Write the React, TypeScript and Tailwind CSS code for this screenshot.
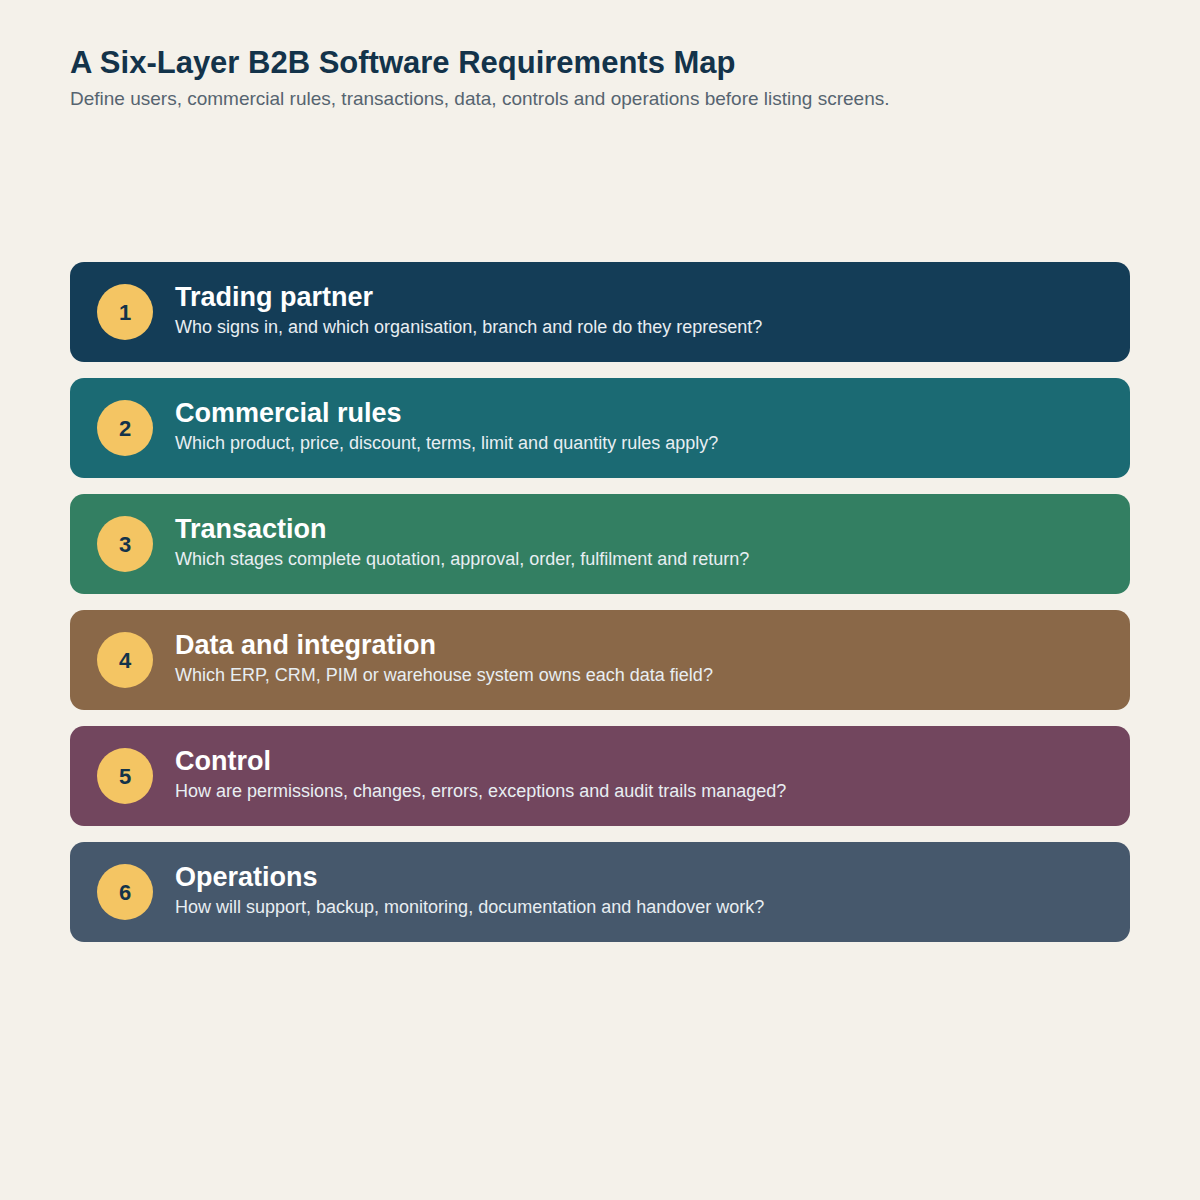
export default function App() {
  const rows = [
    ["Trading partner", "Who signs in, and which organisation, branch and role do they represent?", "bg-[#143d57]"],
    ["Commercial rules", "Which product, price, discount, terms, limit and quantity rules apply?", "bg-[#1b6a73]"],
    ["Transaction", "Which stages complete quotation, approval, order, fulfilment and return?", "bg-[#337f62]"],
    ["Data and integration", "Which ERP, CRM, PIM or warehouse system owns each data field?", "bg-[#8a6848]"],
    ["Control", "How are permissions, changes, errors, exceptions and audit trails managed?", "bg-[#72465e]"],
    ["Operations", "How will support, backup, monitoring, documentation and handover work?", "bg-[#46586c]"],
  ];
  return (
    <div className="w-[1200px] h-[1200px] bg-[#f4f1ea] px-[70px] pt-[44px]" style={{ fontFamily: "Arial, 'Liberation Sans', sans-serif" }}>
      <h1 className="text-[31px] leading-[38px] font-bold text-[#13334a]">A Six-Layer B2B Software Requirements Map</h1>
      <p className="mt-[5px] text-[19px] leading-[24px] text-[#566470]">Define users, commercial rules, transactions, data, controls and operations before listing screens.</p>
      <div className="mt-[151px] flex flex-col gap-[16px]">
        {rows.map(([t, d, c], i) => (
          <div key={i} className={`${c} h-[100px] rounded-[14px] flex items-center pl-[27px]`}>
            <div className="w-[56px] h-[56px] rounded-full bg-[#f4c563] flex items-center justify-center text-[22px] font-bold text-[#13334a]">{i + 1}</div>
            <div className="ml-[22px] -mt-[4px]">
              <div className="text-[27px] leading-[32px] font-bold text-white">{t}</div>
              <div className="mt-[2px] text-[18px] leading-[24px] text-[#e8eef2]">{d}</div>
            </div>
          </div>
        ))}
      </div>
    </div>
  );
}
